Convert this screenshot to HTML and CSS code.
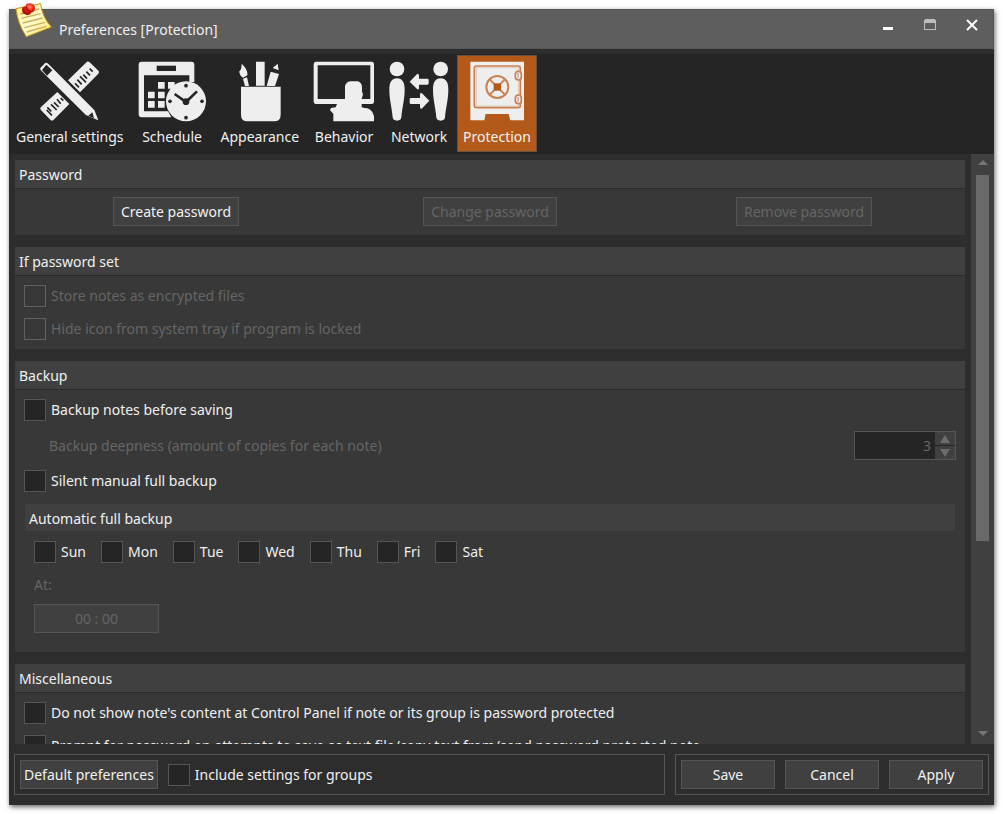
FILE: index.html
```
<!DOCTYPE html>
<html lang="en">
<head>
<meta charset="utf-8">
<title>Preferences [Protection]</title>
<link rel="stylesheet" href="styles.css">
</head>
<body>
<main class="window">
  <header class="titlebar">
    <svg class="app-icon" width="37" height="35" viewBox="45 8 111 105" aria-hidden="true">
      <defs><linearGradient id="paper" x1="0" y1="0" x2="1" y2="1"><stop offset="0" stop-color="#fff27a"/><stop offset=".5" stop-color="#fffbd0"/><stop offset="1" stop-color="#ffe45c"/></linearGradient>
      <radialGradient id="pin" cx=".6" cy=".3" r=".8"><stop offset="0" stop-color="#ff8f70"/><stop offset=".4" stop-color="#e8200c"/><stop offset="1" stop-color="#8e0000"/></radialGradient></defs>
      <path d="M48 25L122 10Q125 48 154 80L79 109Q53 70 48 25Z" fill="url(#paper)" stroke="#c99b12" stroke-width="3"/>
      <path d="M61 41L118 26M64 54L122 40M68 68L128 53M73 82L135 66M80 95L139 78" stroke="#cfae62" stroke-width="4" fill="none"/>
      <path d="M62 40L80 32L84 42Z" fill="#a08a35"/>
      <path d="M66 27Q67 18 77 18Q76 9 90 9Q105 11 105 24Q104 36 93 37Q91 46 80 44Q65 39 66 27Z" fill="url(#pin)"/>
      <path d="M79 20Q81 31 93 35" stroke="#8e0000" stroke-width="3" fill="none"/>
    </svg>
    <h1 class="title">Preferences [Protection]</h1>
    <div class="window-buttons">
      <button class="window-button" aria-label="Minimize"><svg width="12" height="12" viewBox="0 0 12 12"><path d="M1 8h10v3H1z" fill="#fff"/></svg></button>
      <button class="window-button" aria-label="Maximize"><svg width="12" height="12" viewBox="0 0 12 12"><path d="M1 0h10v1h1v10H0V1h1zM1 4v6h10V4z" fill="#bdbdbd" fill-rule="evenodd"/></svg></button>
      <button class="window-button" aria-label="Close"><svg width="12" height="12" viewBox="0 0 12 12"><path d="M1 1L11 11M11 1L1 11" stroke="#fff" stroke-width="2"/></svg></button>
    </div>
  </header>

  <nav class="toolbar" aria-label="Sections">
    <button class="tab">
      <svg width="61" height="61" viewBox="117 182 183 183" aria-hidden="true">
        <g fill="#eee"><path d="M261 184Q265 182 269 186L296 212Q299 216 295 220L240 276L204 240ZM172 275L208 311L161 358Q156 363 151 358L122 328Q119 324 123 320Z"/></g>
        <path d="M225 249l12 12M232 238l13 14M240 228l18 18M250 223l11 12M259 214l11 11M269 205l9 9M182 293l8 8M171 297l11 13M162 306l14 14M153 312l17 17M142 321l12 12M140 329l16 16" stroke="#252525" stroke-width="5"/>
        <path d="M135 186Q140 183 146 189L285 328L299 364L257 346L121 211Q116 205 121 200Z" fill="#eee" stroke="#252525" stroke-width="4"/>
        <path d="M139 193l18 17-16 16-15-17zM277 336l5 18-17-8z" fill="#252525"/>
      </svg>
      <span>General settings</span>
    </button>
    <button class="tab">
      <svg width="69" height="61" viewBox="410 182 207 183" aria-hidden="true">
        <path d="M421 184H570Q579 184 579 193V245H564V225H428V333H500L510 351H421Q412 351 412 342V193Q412 184 421 184Z" fill="#eee"/>
        <path d="M466 196h58v16h-58z" fill="#252525"/>
        <path d="M470 245h20v20h-20zM500 245h20v20h-20zM440 274h20v20h-20zM470 274h20v20h-20zM440 302h20v20h-20zM470 302h20v20h-20z" fill="#eee"/>
        <circle cx="554" cy="303" r="60" fill="#eee"/>
        <path d="M520 281L554 305L587 273" fill="none" stroke="#252525" stroke-width="8"/>
        <g fill="#252525"><circle cx="554" cy="304" r="10"/><circle cx="554" cy="256" r="5.500"/><circle cx="554" cy="352" r="5.500"/><circle cx="506" cy="303" r="5.500"/><circle cx="602" cy="303" r="5.500"/></g>
      </svg>
      <span>Schedule</span>
    </button>
    <button class="tab">
      <svg width="42" height="61" viewBox="86 32 126 183" aria-hidden="true">
        <g fill="#eee"><path d="M92 109H211V193Q211 213 191 213H112Q92 213 92 193Z"/><path d="M137 34h26v72h-26zM181 64l25 7-12 36h-25zM202 40l3 20-18-7zM94 40Q113 57 111 75L98 82Q87 76 87 63Q94 57 94 40ZM98 85l12-4 6 26h-12z"/></g>
      </svg>
      <span>Appearance</span>
    </button>
    <button class="tab">
      <svg width="62" height="61" viewBox="312 32 186 183" aria-hidden="true">
        <path fill="#eee" fill-rule="evenodd" d="M320 34H488Q495 34 495 42V153Q495 161 488 161H458V171Q467 174 475 174Q490 178 495 198V213H373V190L363 180L366 173L380 171L384 161H321Q314 161 314 152V42Q314 34 320 34ZM326 45V146H408V107Q412 93 426 93H447Q459 97 459 112V124L462 132L458 146H484V45Z"/>
      </svg>
      <span>Behavior</span>
    </button>
    <button class="tab">
      <svg width="60" height="60" viewBox="28 34 180 180" aria-hidden="true">
        <g fill="#eee"><circle cx="52" cy="58" r="22"/><circle cx="183" cy="58" r="22"/><path id="body" d="M52 86C68 86 75 98 75 120C75 150 67 175 65 203Q64 213 52 213Q40 213 39 203C37 175 29 150 29 120C29 98 36 86 52 86Z"/><use href="#body" x="131"/><path d="M90 96L113 72Q118 72 118 78V87H143Q147 87 147 91V101Q147 105 143 105H118V116Q118 120 113 119ZM149 153L126 177Q121 178 121 171V163H94Q90 163 90 159V149Q90 145 94 145H121V134Q121 129 126 130Z"/></g>
      </svg>
      <span>Network</span>
    </button>
    <button class="tab tab-active" aria-current="page">
      <svg width="55" height="60" viewBox="271 34 165 180" aria-hidden="true">
        <path d="M272 36H433V212H392L387 193H318L314 212H272Z" fill="#eee"/>
        <g fill="none" stroke="#c98053" stroke-width="5"><rect x="284" y="49" width="138" height="125" rx="7"/><rect x="290" y="54" width="126" height="115" rx="4" stroke-width="1"/><circle cx="353" cy="112" r="33" stroke-width="6"/><path d="M331 90L375 134M375 90L331 134" stroke-width="6"/></g>
        <path d="M342 101h22v22h-22z" fill="#b35a1a"/>
        <g fill="#eee" stroke="#c98053" stroke-width="5"><rect x="407" y="65" width="18" height="26" rx="9"/><rect x="407" y="136" width="18" height="26" rx="9"/><path d="M415 70v16M415 141v16" stroke-width="3"/></g>
      </svg>
      <span>Protection</span>
    </button>
  </nav>

  <div class="content">
    <div class="pages">
      <section class="group">
        <h2 class="group-title">Password</h2>
        <div class="group-body password-actions">
          <button class="button">Create password</button>
          <button class="button" disabled>Change password</button>
          <button class="button" disabled>Remove password</button>
        </div>
      </section>

      <section class="group">
        <h2 class="group-title">If password set</h2>
        <div class="group-body options">
          <label class="check disabled"><input type="checkbox" disabled>Store notes as encrypted files</label>
          <label class="check disabled"><input type="checkbox" disabled>Hide icon from system tray if program is locked</label>
        </div>
      </section>

      <section class="group">
        <h2 class="group-title">Backup</h2>
        <div class="group-body backup">
          <label class="check"><input type="checkbox">Backup notes before saving</label>
          <div class="deepness">
            <label class="disabled" for="copies">Backup deepness (amount of copies for each note)</label>
            <div class="spinner">
              <input id="copies" class="spinner-value" type="text" value="3" disabled>
              <div class="spinner-buttons">
                <button class="spinner-button" aria-label="Increase" disabled><svg width="10" height="8" viewBox="0 0 10 8"><path d="M5 0L10 8H0z" fill="#6c6c6c"/></svg></button>
                <button class="spinner-button" aria-label="Decrease" disabled><svg width="10" height="8" viewBox="0 0 10 8"><path d="M0 0H10L5 8z" fill="#6c6c6c"/></svg></button>
              </div>
            </div>
          </div>
          <label class="check"><input type="checkbox">Silent manual full backup</label>
          <h3 class="subtitle">Automatic full backup</h3>
          <div class="schedule">
            <div class="days">
              <label class="check"><input type="checkbox">Sun</label>
              <label class="check"><input type="checkbox">Mon</label>
              <label class="check"><input type="checkbox">Tue</label>
              <label class="check"><input type="checkbox">Wed</label>
              <label class="check"><input type="checkbox">Thu</label>
              <label class="check"><input type="checkbox">Fri</label>
              <label class="check"><input type="checkbox">Sat</label>
            </div>
            <label class="at-label disabled" for="time">At:</label>
            <input id="time" class="time" type="text" value="00 : 00" disabled>
          </div>
        </div>
      </section>

      <section class="group">
        <h2 class="group-title">Miscellaneous</h2>
        <div class="group-body options">
          <label class="check"><input type="checkbox">Do not show note's content at Control Panel if note or its group is password protected</label>
          <label class="check"><input type="checkbox">Prompt for password on attempts to save as text file/copy text from/send password protected note</label>
        </div>
      </section>
    </div>
    <div class="scrollbar" aria-hidden="true">
      <svg width="10" height="5" viewBox="0 0 10 5"><path d="M5 0L10 5H0z" fill="#757575"/></svg>
      <div class="track"><div class="thumb"></div></div>
      <svg width="10" height="5" viewBox="0 0 10 5"><path d="M0 0H10L5 5z" fill="#757575"/></svg>
    </div>
  </div>

  <footer class="footer">
    <div class="panel panel-defaults">
      <button class="button button-tight">Default preferences</button>
      <label class="check"><input type="checkbox">Include settings for groups</label>
    </div>
    <div class="panel">
      <button class="button button-wide">Save</button>
      <button class="button button-wide">Cancel</button>
      <button class="button button-wide">Apply</button>
    </div>
  </footer>
</main>
</body>
</html>
```
FILE: styles.css
```
* {
  box-sizing: border-box;
}

body {
  margin: 0;
  padding: 9px;
  height: 100vh;
  background: #fff;
  color: #f0f0f0;
  font: 14px/20px "Noto Sans", "Open Sans", sans-serif;
}

button,
input {
  font: inherit;
  color: inherit;
  margin: 0;
}

h1,
h2,
h3 {
  margin: 0;
  font: inherit;
}

svg {
  display: block;
  flex: none;
}

.window {
  display: flex;
  flex-direction: column;
  height: 100%;
  background: #2d2d2d;
  box-shadow: 1px 2px 5px rgba(0, 0, 0, 0.6);
}

.titlebar {
  position: relative;
  display: flex;
  justify-content: space-between;
  flex: none;
  height: 40px;
  padding: 0 9px 0 49px;
  background: #5e5e5e;
  border: 1px solid #575757;
}

.app-icon {
  position: absolute;
  left: 5px;
  top: -7px;
}

.title {
  padding-top: 10px;
}

.window-buttons {
  display: flex;
  gap: 18px;
}

.window-button {
  display: flex;
  align-items: center;
  justify-content: center;
  width: 24px;
  height: 30px;
  padding: 0;
  border: 0;
  background: none;
}

.toolbar {
  display: flex;
  gap: 2px;
  flex: none;
  height: 100px;
  margin-top: 5px;
  padding: 1px;
  background: #252525;
}

.tab {
  display: flex;
  flex-direction: column;
  align-items: center;
  justify-content: space-between;
  height: 97px;
  padding: 5px 5px 4px;
  border: 1px solid transparent;
  background: none;
  white-space: nowrap;
}

.tab-active {
  background: #b35a1a;
  border-color: #6b5140;
}

.content {
  display: flex;
  flex: 1;
  min-height: 0;
}

.pages {
  display: flex;
  flex-direction: column;
  flex: 1;
  gap: 12px;
  padding: 6px;
  overflow: hidden;
}

.group {
  flex: none;
  background: #383838;
}

.group-title {
  height: 29px;
  padding: 5px 4px 3px;
  background: #404040;
  border-bottom: 1px solid #2b2b2b;
}

.button {
  height: 29px;
  padding: 1px 7px 0;
  background: #404040;
  border: 1px solid #555;
  white-space: nowrap;
}

.button:disabled,
.disabled {
  color: #656565;
}

.button-tight {
  padding: 1px 3px 0;
}

.button-wide {
  width: 94px;
}

.password-actions {
  display: grid;
  grid-template-columns: repeat(3, 1fr);
  justify-items: center;
  padding: 8px 4px 9px;
}

.options {
  display: flex;
  flex-direction: column;
  gap: 11px;
  padding: 9px;
}

.check {
  display: flex;
  align-items: center;
  gap: 5px;
  height: 22px;
  line-height: 22px;
  white-space: nowrap;
}

.check input {
  appearance: none;
  flex: none;
  width: 22px;
  height: 22px;
  background: #252525;
  border: 1px solid #555;
}

.check input:disabled {
  background: #383838;
  border-color: #606060;
}

.check input:checked {
  background: #b35a1a;
}

.backup {
  padding: 9px 9px 19px;
}

.deepness {
  display: flex;
  align-items: center;
  justify-content: space-between;
  margin: 10px 0;
  padding-left: 25px;
}

.spinner {
  display: flex;
  width: 102px;
  height: 29px;
  background: #252525;
  border: 1px solid #555;
}

.spinner-value {
  flex: 1;
  min-width: 0;
  padding: 0 4px;
  border: 0;
  background: none;
  color: #656565;
  text-align: right;
}

.spinner-buttons {
  display: flex;
  flex-direction: column;
  gap: 1px;
  width: 20px;
}

.spinner-button {
  display: flex;
  flex: 1;
  align-items: center;
  justify-content: center;
  padding: 0;
  border: 0;
  background: #404040;
}

.subtitle {
  height: 27px;
  margin: 12px 1px 10px;
  padding: 5px 4px 2px;
  background: #404040;
}

.schedule {
  padding-left: 10px;
}

.days {
  display: flex;
  gap: 15px;
}

.at-label {
  display: block;
  margin: 12px 0 9px;
}

.time {
  display: block;
  width: 125px;
  height: 29px;
  background: #404040;
  border: 1px solid #555;
  color: #656565;
  text-align: center;
}

.scrollbar {
  display: flex;
  flex-direction: column;
  align-items: center;
  gap: 10px;
  width: 23px;
  padding: 6px 0 8px;
  background: #404040;
}

.track {
  flex: 1;
  width: 13px;
}

.thumb {
  height: 67%;
  background: #696969;
}

.footer {
  display: flex;
  gap: 10px;
  flex: none;
  padding: 10px 5px;
}

.panel {
  display: flex;
  align-items: center;
  gap: 10px;
  height: 41px;
  padding: 0 5px;
  border: 1px solid #555;
}

.panel-defaults {
  flex: 1;
}
```
